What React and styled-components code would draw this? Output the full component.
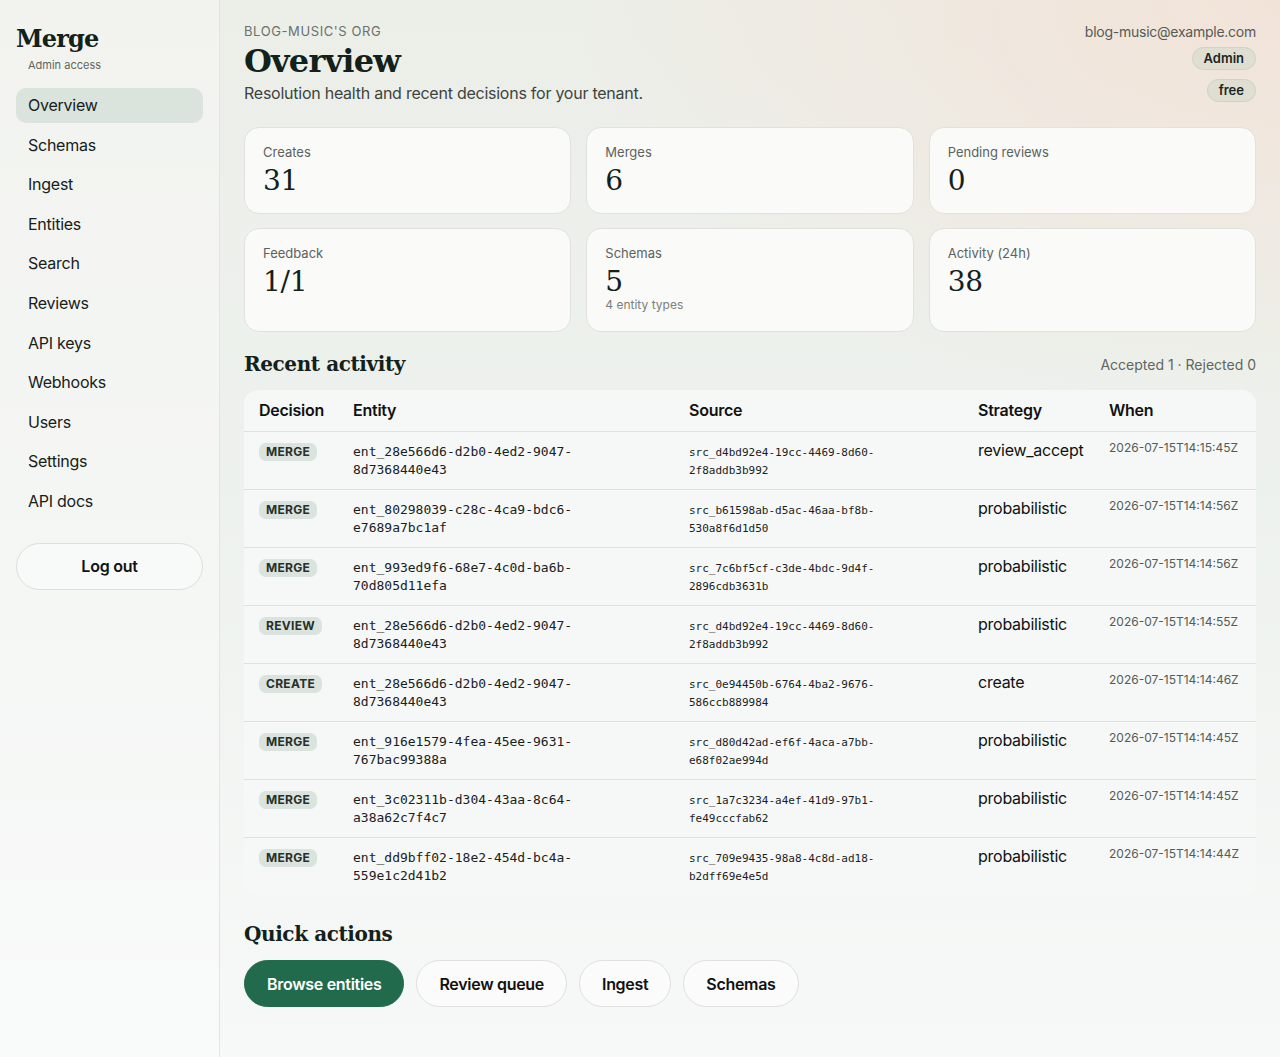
import styled, { createGlobalStyle } from 'styled-components'

const Global = createGlobalStyle`
    html, body { margin: 0; padding: 0; }
    body {
        font-family: Inter, "Noto Sans", sans-serif;
        letter-spacing: -0.25px;
        color: #16211b;
        background: #f4f6f3;
    }
    * { box-sizing: border-box; }
`

const serif = `"DejaVu Serif", "Liberation Serif", serif`
const mono = `"DejaVu Sans Mono", "Liberation Mono", monospace`

const Shell = styled.div`
    display: flex;
    min-height: 1057px;
    background:
        radial-gradient(ellipse 700px 420px at 100% 0%, #f2e3d8 0%, rgba(242,227,216,0) 100%),
        linear-gradient(180deg, #eceee8 0%, #edf1ed 45%, #f7f9f8 100%);
`
const Sidebar = styled.aside`
    width: 220px;
    flex-shrink: 0;
    padding: 22px 16px;
    border-right: 1px solid #e2e5e0;
    background: linear-gradient(180deg, #f2f3ef 0%, #f5f7f5 60%, #f9fafa 100%);
    display: flex;
    flex-direction: column;
`
const Brand = styled.div`
    font-family: ${serif};
    font-weight: 700;
    font-size: 24px;
    letter-spacing: -0.8px;
    line-height: 32px;
    color: #122119;
    margin-top: 1px;
`
const BrandSub = styled.div`
    font-size: 11px;
    letter-spacing: 0;
    color: #5f6661;
    margin: 3px 0 16px 12px;
`
const Nav = styled.nav`
    display: flex;
    flex-direction: column;
    gap: 4.6px;
`
const NavItem = styled.a`
    display: block;
    height: 35px;
    line-height: 35px;
    padding: 0 12px;
    border-radius: 10px;
    font-size: 16px;
    color: #16211b;
    background: ${(p) => (p.$active ? '#dae3dc' : 'transparent')};
`
const LogOut = styled.button`
    margin-top: 24px;
    height: 47px;
    border-radius: 24px;
    border: 1px solid #dcdfdb;
    background: #f8faf9;
    font-family: Inter, sans-serif;
    letter-spacing: -0.25px;
    font-size: 16px;
    font-weight: 600;
    color: #111;
`
const Main = styled.main`
    flex: 1;
    padding: 23px 24px 40px 24px;
`
const Header = styled.header`
    display: flex;
    justify-content: space-between;
    align-items: flex-start;
`
const Org = styled.div`
    font-size: 13px;
    letter-spacing: 0.6px;
    color: #6b716c;
    line-height: 16px;
`
const Title = styled.h1`
    margin: 3px 0 0;
    font-family: ${serif};
    font-size: 32px;
    line-height: 38px;
    font-weight: 700;
    letter-spacing: -0.8px;
    color: #122119;
`
const Sub = styled.p`
    margin: 3px 0 0;
    font-size: 16px;
    line-height: 20px;
    color: #3d4440;
`
const Account = styled.div`
    display: flex;
    flex-direction: column;
    align-items: flex-end;
    gap: 9px;
    padding-top: 1px;
`
const Email = styled.div`
    font-size: 14px;
    color: #555b56;
    line-height: 16px;
    margin-bottom: -2px;
`
const Pill = styled.span`
    display: inline-block;
    height: 23px;
    line-height: 21px;
    padding: 0 11px;
    border-radius: 12px;
    border: 1px solid #cfd2c6;
    background: #dedfd2;
    font-size: 13px;
    font-weight: 600;
    letter-spacing: 0;
    color: #1c241f;
`
const Stats = styled.section`
    display: grid;
    grid-template-columns: repeat(3, 1fr);
    gap: 14px 15px;
    margin-top: 24px;
`
const Card = styled.div`
    min-height: ${(p) => (p.$tall ? '104px' : '87px')};
    padding: 16px 18px 13px;
    border-radius: 15px;
    border: 1px solid #e1e2dd;
    background: #fafaf8;
`
const CardLabel = styled.div`
    font-size: 13px;
    letter-spacing: 0;
    color: #5c625e;
    line-height: 16px;
`
const CardValue = styled.div`
    font-family: ${serif};
    font-size: 28px;
    line-height: 34px;
    margin-top: 4px;
    color: #122119;
`
const CardHint = styled.div`
    font-size: 12px;
    letter-spacing: 0;
    color: #7a807c;
    margin-top: -2px;
`
const SectionHead = styled.div`
    display: flex;
    justify-content: space-between;
    align-items: center;
    margin-top: ${(p) => p.$top || '19px'};
    margin-bottom: 13px;
`
const H2 = styled.h2`
    margin: 0;
    font-family: ${serif};
    font-size: 20px;
    line-height: 26px;
    font-weight: 700;
    letter-spacing: -0.4px;
    color: #122119;
`
const Meta = styled.div`
    font-size: 14px;
    letter-spacing: 0;
    color: #5f6661;
`
const Table = styled.table`
    width: 100%;
    table-layout: fixed;
    border-collapse: collapse;
    background: #f5f8f6;
    border-radius: 14px;
    overflow: hidden;
`
const Col = styled.col`
    width: ${(p) => p.$w || 'auto'};
`
const Th = styled.th`
    text-align: left;
    font-size: 16px;
    font-weight: 600;
    height: 41px;
    padding: 0 15px;
    border-bottom: 1px solid #dde2de;
    color: #111;
`
const Td = styled.td`
    vertical-align: top;
    padding: 11px 15px 0;
    height: 58px;
    border-bottom: ${(p) => (p.$last ? 'none' : '1px solid #dde2de')};
`
const Badge = styled.span`
    display: inline-block;
    vertical-align: top;
    padding: 2px 7px;
    border-radius: 7px;
    background: #dae3dd;
    font-size: 12px;
    font-weight: 700;
    letter-spacing: 0.3px;
    color: #27302b;
    line-height: 14px;
`
const EntityId = styled.div`
    font-family: ${mono};
    font-size: 13px;
    line-height: 18px;
    letter-spacing: 0;
    color: #1a211d;
`
const SourceId = styled.div`
    font-family: ${mono};
    font-size: 11px;
    line-height: 18px;
    letter-spacing: 0;
    color: #1a211d;
    margin-top: 1px;
`
const Strategy = styled.div`
    font-size: 16px;
    color: #111;
    margin-top: -3px;
`
const When = styled.div`
    font-size: 12px;
    letter-spacing: 0;
    color: #555b56;
    white-space: nowrap;
    margin-top: -3px;
`
const Actions = styled.div`
    display: flex;
    gap: 12px;
`
const ActionBtn = styled.button`
    height: 47px;
    padding: 0 22px;
    border-radius: 24px;
    font-family: Inter, sans-serif;
    letter-spacing: -0.3px;
    font-size: 16px;
    font-weight: 600;
    border: 1px solid ${(p) => (p.$primary ? '#216b4c' : '#dfe1de')};
    background: ${(p) => (p.$primary ? '#216b4c' : '#fafbfa')};
    color: ${(p) => (p.$primary ? '#fff' : '#111')};
`

const nav = ['Overview', 'Schemas', 'Ingest', 'Entities', 'Search', 'Reviews', 'API keys', 'Webhooks', 'Users', 'Settings', 'API docs']

const rows = [
    ['MERGE', 'ent_28e566d6-d2b0-4ed2-9047-8d7368440e43', 'src_d4bd92e4-19cc-4469-8d60-2f8addb3b992', 'review_accept', '2026-07-15T14:15:45Z'],
    ['MERGE', 'ent_80298039-c28c-4ca9-bdc6-e7689a7bc1af', 'src_b61598ab-d5ac-46aa-bf8b-530a8f6d1d50', 'probabilistic', '2026-07-15T14:14:56Z'],
    ['MERGE', 'ent_993ed9f6-68e7-4c0d-ba6b-70d805d11efa', 'src_7c6bf5cf-c3de-4bdc-9d4f-2896cdb3631b', 'probabilistic', '2026-07-15T14:14:56Z'],
    ['REVIEW', 'ent_28e566d6-d2b0-4ed2-9047-8d7368440e43', 'src_d4bd92e4-19cc-4469-8d60-2f8addb3b992', 'probabilistic', '2026-07-15T14:14:55Z'],
    ['CREATE', 'ent_28e566d6-d2b0-4ed2-9047-8d7368440e43', 'src_0e94450b-6764-4ba2-9676-586ccb889984', 'create', '2026-07-15T14:14:46Z'],
    ['MERGE', 'ent_916e1579-4fea-45ee-9631-767bac99388a', 'src_d80d42ad-ef6f-4aca-a7bb-e68f02ae994d', 'probabilistic', '2026-07-15T14:14:45Z'],
    ['MERGE', 'ent_3c02311b-d304-43aa-8c64-a38a62c7f4c7', 'src_1a7c3234-a4ef-41d9-97b1-fe49cccfab62', 'probabilistic', '2026-07-15T14:14:45Z'],
    ['MERGE', 'ent_dd9bff02-18e2-454d-bc4a-559e1c2d41b2', 'src_709e9435-98a8-4c8d-ad18-b2dff69e4e5d', 'probabilistic', '2026-07-15T14:14:44Z'],
]

// ids wrap after the last dash in the reference
const split = (id) => {
    const i = id.lastIndexOf('-') + 1
    return [id.slice(0, i), id.slice(i)]
}

const App = () => {
    return (
        <Shell>
            <Global />
            <Sidebar>
                <Brand>Merge</Brand>
                <BrandSub>Admin access</BrandSub>
                <Nav>
                    {nav.map((n) => (
                        <NavItem key={n} $active={n === 'Overview'}>{n}</NavItem>
                    ))}
                </Nav>
                <LogOut>Log out</LogOut>
            </Sidebar>
            <Main>
                <Header>
                    <div>
                        <Org>BLOG-MUSIC'S ORG</Org>
                        <Title>Overview</Title>
                        <Sub>Resolution health and recent decisions for your tenant.</Sub>
                    </div>
                    <Account>
                        <Email>blog-music@example.com</Email>
                        <Pill>Admin</Pill>
                        <Pill>free</Pill>
                    </Account>
                </Header>

                <Stats>
                    <Card><CardLabel>Creates</CardLabel><CardValue>31</CardValue></Card>
                    <Card><CardLabel>Merges</CardLabel><CardValue>6</CardValue></Card>
                    <Card><CardLabel>Pending reviews</CardLabel><CardValue>0</CardValue></Card>
                    <Card $tall><CardLabel>Feedback</CardLabel><CardValue>1/1</CardValue></Card>
                    <Card $tall><CardLabel>Schemas</CardLabel><CardValue>5</CardValue><CardHint>4 entity types</CardHint></Card>
                    <Card $tall><CardLabel>Activity (24h)</CardLabel><CardValue>38</CardValue></Card>
                </Stats>

                <SectionHead>
                    <H2>Recent activity</H2>
                    <Meta>Accepted 1 · Rejected 0</Meta>
                </SectionHead>
                <Table>
                    <colgroup>
                        <Col $w="94px" />
                        <Col $w="336px" />
                        <Col $w="289px" />
                        <Col $w="131px" />
                        <Col />
                    </colgroup>
                    <thead>
                        <tr>
                            <Th>Decision</Th>
                            <Th>Entity</Th>
                            <Th>Source</Th>
                            <Th>Strategy</Th>
                            <Th>When</Th>
                        </tr>
                    </thead>
                    <tbody>
                        {rows.map((r, i) => {
                            const last = i === rows.length - 1
                            const [e1, e2] = split(r[1])
                            const [s1, s2] = split(r[2])
                            return (
                                <tr key={i}>
                                    <Td $last={last}><Badge>{r[0]}</Badge></Td>
                                    <Td $last={last}><EntityId>{e1}<br />{e2}</EntityId></Td>
                                    <Td $last={last}><SourceId>{s1}<br />{s2}</SourceId></Td>
                                    <Td $last={last}><Strategy>{r[3]}</Strategy></Td>
                                    <Td $last={last}><When>{r[4]}</When></Td>
                                </tr>
                            )
                        })}
                    </tbody>
                </Table>

                <SectionHead $top="26px">
                    <H2>Quick actions</H2>
                </SectionHead>
                <Actions>
                    <ActionBtn $primary>Browse entities</ActionBtn>
                    <ActionBtn>Review queue</ActionBtn>
                    <ActionBtn>Ingest</ActionBtn>
                    <ActionBtn>Schemas</ActionBtn>
                </Actions>
            </Main>
        </Shell>
    )
}

export default App
